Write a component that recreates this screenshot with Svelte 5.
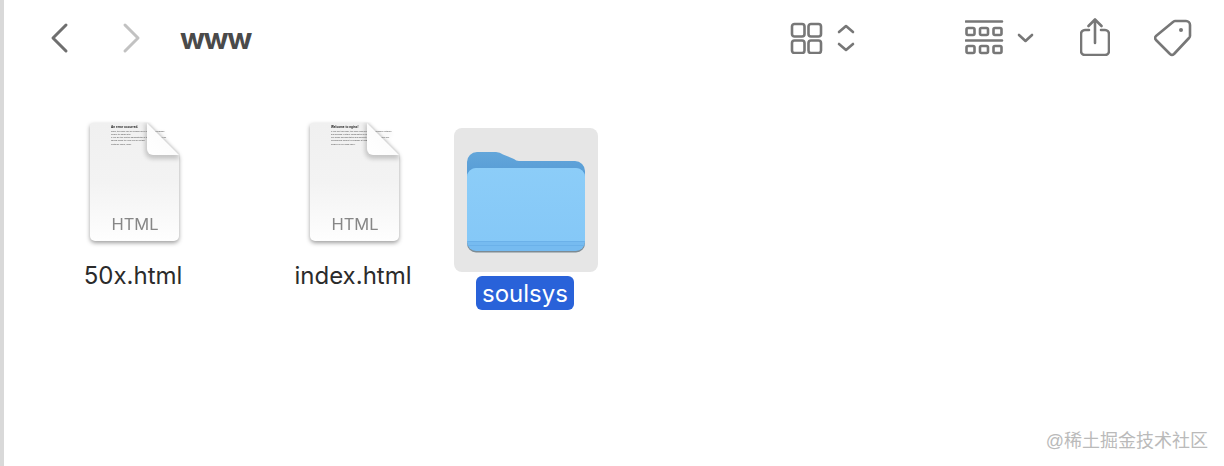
<script lang="ts">
	const files = [
		{
			name: '50x.html',
			heading: 'An error occurred.',
			lines: [
				'Sorry, the page you are looking for is currently unavailable.',
				'Please try again later.',
				'If you are the system administrator of this resource then you',
				'should check the error log for details.',
				'Faithfully yours, nginx.'
			]
		},
		{
			name: 'index.html',
			heading: 'Welcome to nginx!',
			lines: [
				'If you see this page, the nginx web server is successfully installed',
				'and working. Further configuration is required.',
				'For online documentation and support please refer to nginx.org.',
				'Commercial support is available at nginx.com.',
				'Thank you for using nginx.'
			]
		}
	];
</script>

{#snippet fileIcon(heading: string, lines: string[])}
	<svg class="doc" width="90" height="120" viewBox="0 0 90 120">
		<path
			d="M3 1H57L89 33V114a5 5 0 0 1-5 5H5a5 5 0 0 1-5-5V4a3 3 0 0 1 3-3z"
			fill="url(#page)"
		/>
		<text class="doc-title" x="21" y="5.500">{heading}</text>
		{#each lines as line, i}
			<text class="doc-line" x="21" y={9.5 + i * 3.3}>{line}</text>
		{/each}
		<path class="fold-shadow" d="M57 1L89 33V37H63a8 8 0 0 1-8-8V1z" />
		<path d="M57 1L89 33H63a6 6 0 0 1-6-6z" fill="url(#fold)" />
		<text class="doc-kind" x="45" y="107.500">HTML</text>
	</svg>
{/snippet}

<div class="window">
	<header class="toolbar">
		<svg class="back" width="20" height="32" viewBox="0 0 20 32">
			<path d="M17 3L4 16L17 29" />
		</svg>
		<svg class="forward" width="20" height="32" viewBox="0 0 20 32">
			<path d="M3 3L16 16L3 29" />
		</svg>
		<h1>www</h1>

		<svg class="view-grid" width="66" height="32" viewBox="0 0 66 32">
			<rect x="2" y="2" width="12.5" height="12.5" rx="2.5" />
			<rect x="18.5" y="2" width="12.5" height="12.5" rx="2.5" />
			<rect x="2" y="18.5" width="12.5" height="12.5" rx="2.5" />
			<rect x="18.5" y="18.5" width="12.5" height="12.5" rx="2.5" />
			<path d="M49 10L56 4L63 10M49 22L56 28L63 22" />
		</svg>

		<svg class="view-group" width="70" height="36" viewBox="0 0 70 36">
			<path d="M1 1.500H37M1 20.500H37" />
			<rect x="1.500" y="8" width="8" height="7" rx="1.500" />
			<rect x="15" y="8" width="8" height="7" rx="1.500" />
			<rect x="28.500" y="8" width="8" height="7" rx="1.500" />
			<rect x="1.500" y="26" width="8" height="7" rx="1.500" />
			<rect x="15" y="26" width="8" height="7" rx="1.500" />
			<rect x="28.500" y="26" width="8" height="7" rx="1.500" />
			<path d="M54 15L60.500 21L67 15" />
		</svg>

		<svg class="share" width="30" height="38" viewBox="0 0 30 38">
			<path d="M9 12H5a4 4 0 0 0-4 4V33a4 4 0 0 0 4 4H25a4 4 0 0 0 4-4V16a4 4 0 0 0-4-4H21" />
			<path d="M15 25V2M8.500 8L15 1.500L21.500 8" />
		</svg>

		<svg class="tag" width="38" height="38" viewBox="0 0 38 38">
			<path d="M21 2H32a4 4 0 0 1 4 4V17a3 3 0 0 1-1 2L20 35a3 3 0 0 1-4 0L2 21a3 3 0 0 1 0-4L19 3a3 3 0 0 1 2-1z" />
			<circle cx="27" cy="11" r="2" />
		</svg>
	</header>

	<main class="items">
		{#each files as file}
			<div class="file">
				{@render fileIcon(file.heading, file.lines)}
				<span class="label">{file.name}</span>
			</div>
		{/each}

		<div class="folder">
			<div class="folder-thumb">
				<svg width="144" height="144" viewBox="0 0 144 144">
					<path
						d="M13 34a10 10 0 0 1 10-10H42q4 0 7 2.500L60 31q2 2 5 2H121a10 10 0 0 1 10 10V70H13z"
						fill="url(#folder-back)"
					/>
					<rect x="13" y="60" width="118" height="64.500" rx="9" fill="#7d8b94" />
					<rect x="13" y="40" width="118" height="83" rx="9" fill="#76bbf0" />
					<path d="M13 49a9 9 0 0 1 9-9H122a9 9 0 0 1 9 9V113H13z" fill="url(#folder-front)" />
					<path d="M13.500 113.500H130.500M13.500 117.500H130.500" stroke="#6bb1e9" stroke-width="1" />
				</svg>
			</div>
			<span class="label selected">soulsys</span>
		</div>
	</main>

	<div class="watermark">@稀土掘金技术社区</div>

	<svg class="defs" width="0" height="0">
		<defs>
			<linearGradient id="page" x1="0" y1="0" x2="0" y2="1">
				<stop offset="0" stop-color="#f0f0f0" />
				<stop offset="0.5" stop-color="#f3f3f3" />
				<stop offset="1" stop-color="#fefefe" />
			</linearGradient>
			<linearGradient id="fold" x1="0" y1="1" x2="1" y2="0">
				<stop offset="0" stop-color="#ffffff" />
				<stop offset="0.7" stop-color="#fbfbfb" />
				<stop offset="1" stop-color="#dcdcdc" />
			</linearGradient>
			<linearGradient id="folder-back" x1="0" y1="0" x2="0" y2="1">
				<stop offset="0" stop-color="#63a6da" />
				<stop offset="1" stop-color="#4c93d2" />
			</linearGradient>
			<linearGradient id="folder-front" x1="0" y1="0" x2="0" y2="1">
				<stop offset="0" stop-color="#8ccdf8" />
				<stop offset="1" stop-color="#85c8f7" />
			</linearGradient>
		</defs>
	</svg>
</div>

<style>
	:global(body) {
		margin: 0;
		background: #fff;
	}
	.window {
		position: relative;
		box-sizing: border-box;
		height: 466px;
		overflow: hidden;
		border-left: 4px solid #d9d9d9;
		font-family: Inter, 'Liberation Sans', sans-serif;
		color: #2b2b2b;
	}
	.toolbar {
		display: flex;
		align-items: center;
		height: 76px;
		padding-left: 45px;
	}
	.toolbar svg {
		flex: none;
		fill: none;
		stroke: #777;
		stroke-width: 2.6;
		stroke-linecap: round;
		stroke-linejoin: round;
	}
	.toolbar .back {
		stroke: #6f6f6f;
		stroke-width: 3;
	}
	.toolbar .forward {
		margin-left: 53px;
		stroke: #c2c2c2;
		stroke-width: 3;
	}
	h1 {
		margin: 0 0 0 38px;
		width: 71px;
		font-size: 29.500px;
		line-height: 36px;
		font-weight: 700;
		letter-spacing: -1.500px;
		color: #4a4a4a;
	}
	.view-grid {
		margin-left: 539px;
	}
	.view-group {
		margin-left: 109px;
	}
	.share {
		margin-left: 45px;
		margin-top: -3px;
	}
	.tag {
		margin-left: 44px;
	}
	.tag circle {
		fill: #777;
		stroke: none;
	}
	.items {
		display: flex;
		align-items: flex-start;
		padding: 46px 0 0 58px;
	}
	.file,
	.folder {
		display: flex;
		flex-direction: column;
		align-items: center;
		width: 144px;
	}
	.file {
		margin-right: 76px;
	}
	.file:nth-child(2) {
		margin-right: 28px;
	}
	.doc {
		overflow: hidden;
		padding: 0 6px 6px;
		margin-left: 1px;
		filter: drop-shadow(0 2px 2px rgba(0, 0, 0, 0.38));
	}
	.fold-shadow {
		fill: #000;
		opacity: 0.18;
		filter: blur(2px);
	}
	.doc-title {
		font-family: 'Liberation Sans', sans-serif;
		font-size: 3.100px;
		font-weight: 700;
		fill: #111;
	}
	.doc-line {
		font-family: 'Liberation Sans', sans-serif;
		font-size: 2.100px;
		fill: #444;
	}
	.doc-kind {
		font-family: Inter, 'Liberation Sans', sans-serif;
		font-size: 16.500px;
		text-anchor: middle;
		fill: #878787;
	}
	.label {
		font-size: 24px;
		line-height: 28px;
		margin: 14px 2px 0 0;
		white-space: nowrap;
	}
	.folder-thumb {
		width: 144px;
		height: 144px;
		margin-top: 6px;
		border-radius: 8px;
		background: #e6e6e6;
	}
	.folder-thumb svg {
		display: block;
	}
	.label.selected {
		margin: 4px 2px 0 0;
		width: 98px;
		height: 34px;
		line-height: 36px;
		text-align: center;
		border-radius: 6px;
		background: #2962d9;
		color: #fff;
	}
	.watermark {
		position: absolute;
		right: 16px;
		bottom: 13px;
		font-family: 'Liberation Sans', 'Noto Sans CJK SC', sans-serif;
		font-size: 18px;
		line-height: 24px;
		color: #bababa;
	}
	.defs {
		position: absolute;
	}
</style>
